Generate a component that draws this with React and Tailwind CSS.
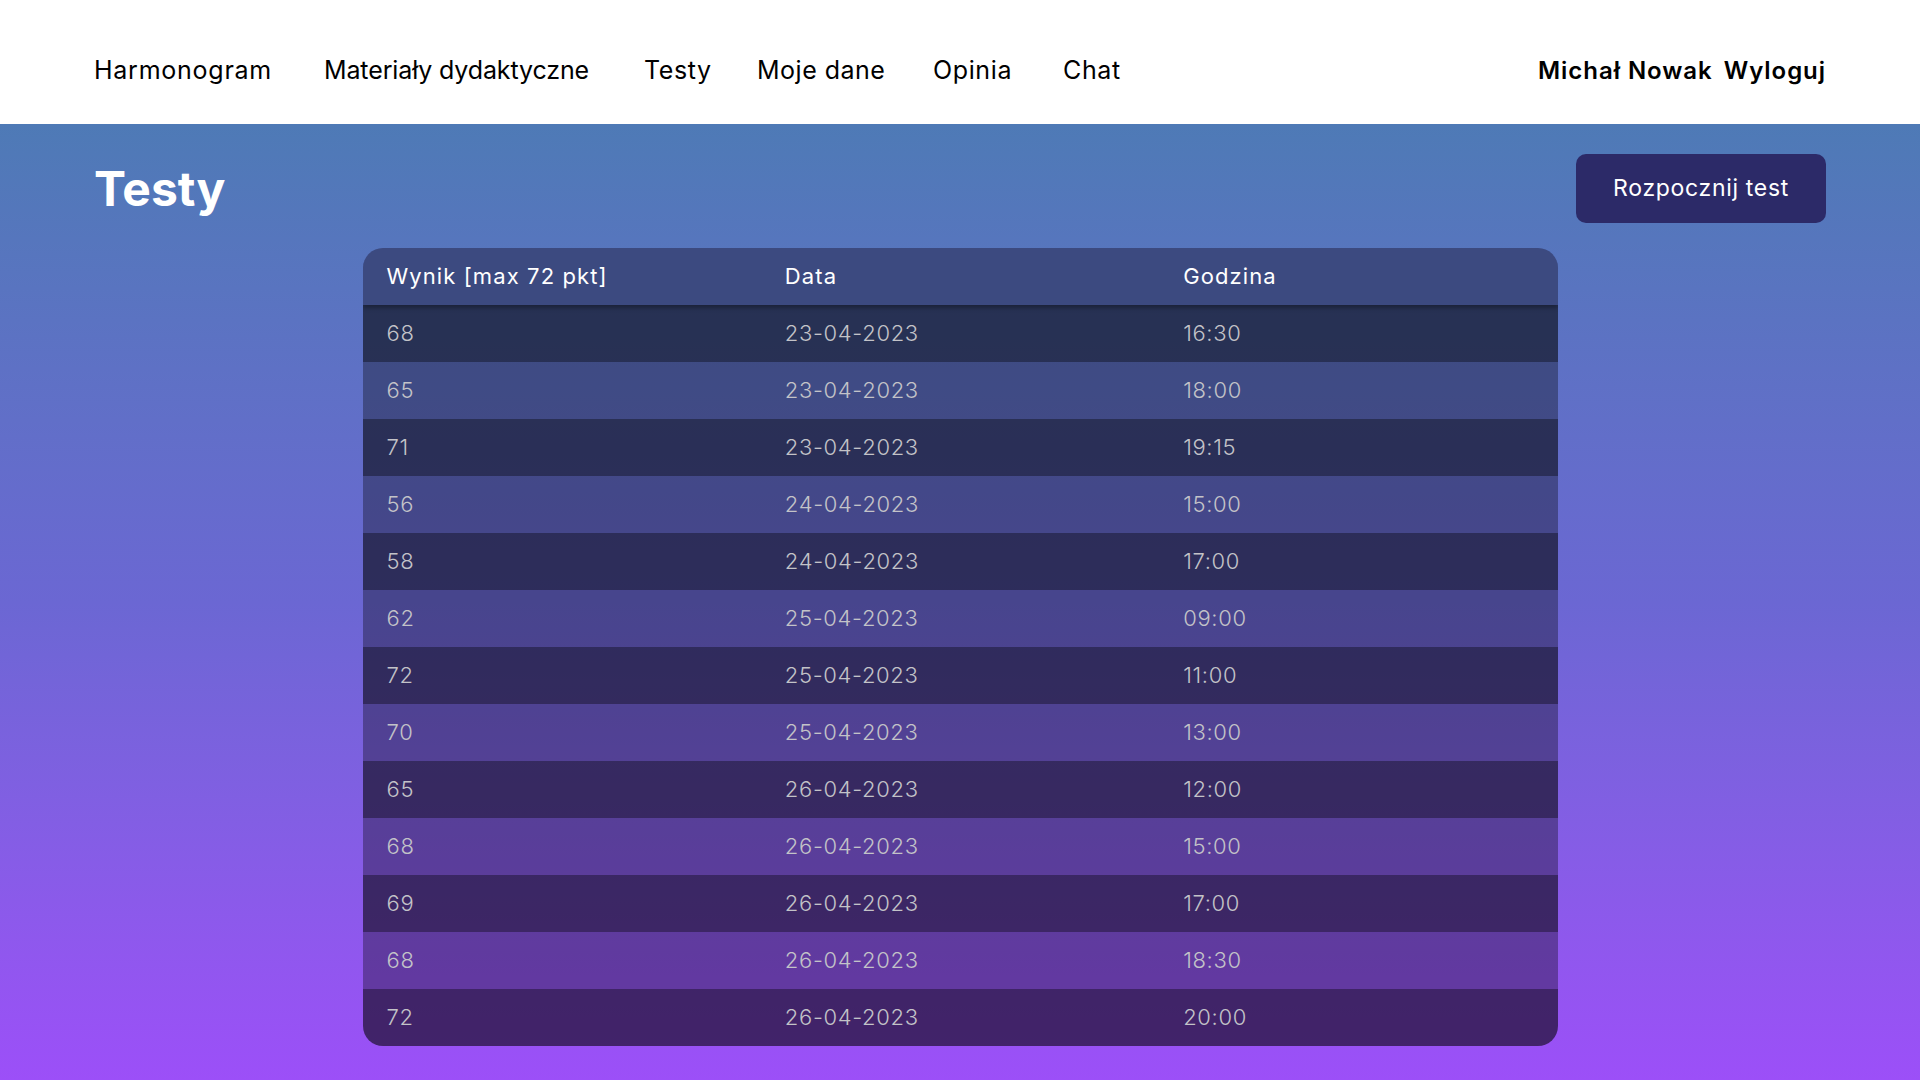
import React from 'react';

const navItems = [
  { label: 'Harmonogram', cls: 'w-[179px] tracking-[0.03em]' },
  { label: 'Materiały dydaktyczne', cls: 'w-[269px] tracking-[-0.005em]' },
  { label: 'Testy', cls: 'w-[62px] tracking-[0.025em]' },
  { label: 'Moje dane', cls: 'w-[125px] tracking-[0.02em]' },
  { label: 'Opinia', cls: 'w-[79px] tracking-[0.025em]' },
  { label: 'Chat', cls: 'w-[57px] tracking-[0.025em]' },
];

const results = [
  { score: 68, date: '23-04-2023', time: '16:30' },
  { score: 65, date: '23-04-2023', time: '18:00' },
  { score: 71, date: '23-04-2023', time: '19:15' },
  { score: 56, date: '24-04-2023', time: '15:00' },
  { score: 58, date: '24-04-2023', time: '17:00' },
  { score: 62, date: '25-04-2023', time: '09:00' },
  { score: 72, date: '25-04-2023', time: '11:00' },
  { score: 70, date: '25-04-2023', time: '13:00' },
  { score: 65, date: '26-04-2023', time: '12:00' },
  { score: 68, date: '26-04-2023', time: '15:00' },
  { score: 69, date: '26-04-2023', time: '17:00' },
  { score: 68, date: '26-04-2023', time: '18:30' },
  { score: 72, date: '26-04-2023', time: '20:00' },
];

const App = () => {
  return (
    <div className="min-h-screen flex flex-col font-['Inter',sans-serif]">
      <nav className="h-[124px] bg-white flex items-center justify-between px-[94px] pt-[17px] text-black">
        <ul className="flex items-center gap-[51px] text-[25px]">
          {navItems.map((item) => (
            <li key={item.label} className={`${item.cls} whitespace-nowrap cursor-pointer`}>{item.label}</li>
          ))}
        </ul>
        <div className="flex items-center gap-[11px] text-[24px] font-semibold tracking-[0.04em]">
          <span>Michał Nowak</span>
          <button className="font-semibold">Wyloguj</button>
        </div>
      </nav>

      <main className="flex-1 bg-linear-to-b from-[#4e7ab6] via-[#6b67d3] to-[#9c4ff8] px-[94px] pt-[30px] pb-[34px]">
        <div className="flex items-center justify-between h-[69px]">
          <h1 className="text-[48px] font-bold text-white leading-none">Testy</h1>
          <button className="h-[69px] px-[37px] rounded-[10px] bg-[#2c2a68] text-white text-[23px] tracking-[0.03em]">
            Rozpocznij test
          </button>
        </div>

        <div className="w-[1195px] mx-auto mt-[25px] rounded-[20px] overflow-hidden">
          <div className="relative z-10 grid grid-cols-3 h-[57px] items-center bg-[#3c4a80] text-white text-[22px] tracking-[0.05em] shadow-[0_3px_4px_rgba(0,0,0,0.3)]">
            <div className="pl-[24px]">Wynik [max 72 pkt]</div>
            <div className="pl-[24px]">Data</div>
            <div className="pl-[24px]">Godzina</div>
          </div>
          {results.map((row, idx) => (
            <div
              key={idx}
              className={`grid grid-cols-3 h-[57px] items-center text-[22px] font-light tracking-[0.03em] text-[#c3c3c8] ${idx % 2 === 0 ? 'bg-black/[0.57]' : 'bg-black/[0.33]'}`}
            >
              <div className="pl-[24px]">{row.score}</div>
              <div className="pl-[24px]">{row.date}</div>
              <div className="pl-[24px]">{row.time}</div>
            </div>
          ))}
        </div>
      </main>
    </div>
  );
};

export default App;
